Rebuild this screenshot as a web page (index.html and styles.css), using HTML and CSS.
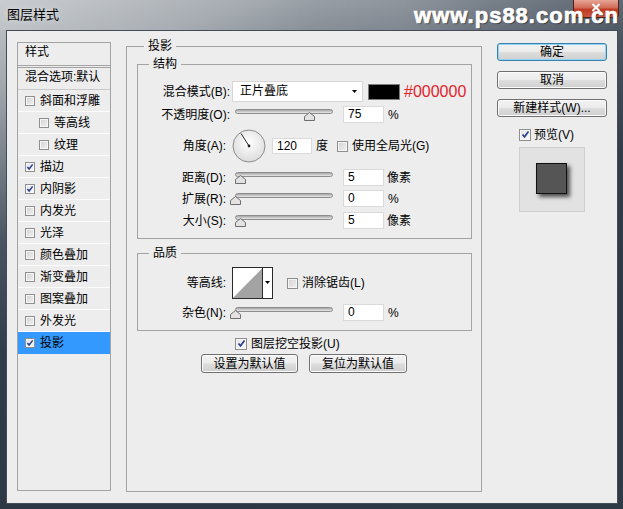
FILE: index.html
```html
<!DOCTYPE html>
<html>
<head>
<meta charset="utf-8">
<title>图层样式</title>
<link rel="stylesheet" href="styles.css">
</head>
<body>
<div class="win">
  <div class="titlebar">
    <span class="title">图层样式</span>
    <span class="close"><svg viewBox="0 0 10 9"><path d="M1.5 1l7 7M8.5 1l-7 7"/></svg></span>
    <span class="wm">www.ps88.com.cn</span>
  </div>
  <div class="client">
    <div class="styles">
      <div class="sh">样式</div>
      <div class="blend">混合选项:默认</div>
      <div class="it"><span class="cb"></span>斜面和浮雕</div>
      <div class="it sub"><span class="cb"></span>等高线</div>
      <div class="it sub"><span class="cb"></span>纹理</div>
      <div class="it"><span class="cb on"><svg viewBox="0 0 9 9"><path d="M1.5 4.5l2 2.3 4-5.3"/></svg></span>描边</div>
      <div class="it"><span class="cb on"><svg viewBox="0 0 9 9"><path d="M1.5 4.5l2 2.3 4-5.3"/></svg></span>内阴影</div>
      <div class="it"><span class="cb"></span>内发光</div>
      <div class="it"><span class="cb"></span>光泽</div>
      <div class="it"><span class="cb"></span>颜色叠加</div>
      <div class="it"><span class="cb"></span>渐变叠加</div>
      <div class="it"><span class="cb"></span>图案叠加</div>
      <div class="it"><span class="cb"></span>外发光</div>
      <div class="it sel"><span class="cb on"><svg viewBox="0 0 9 9"><path d="M1.5 4.5l2 2.3 4-5.3"/></svg></span>投影</div>
    </div>

    <fieldset class="main">
      <legend class="lg-main">投影</legend>
      <fieldset class="grp struct">
        <legend class="lg-grp">结构</legend>
        <div class="row r1">
          <span class="lbl wide">混合模式(B):</span>
          <span class="select">正片叠底<svg class="arrow" viewBox="0 0 5 3"><path d="M0 0h5L2.5 3z"/></svg></span>
          <span class="swatch"></span>
          <span class="hex">#000000</span>
        </div>
        <div class="row r2">
          <span class="lbl wide">不透明度(O):</span>
          <span class="slider s-wide"><span class="thumb" style="left:69px"><svg viewBox="0 0 11 9"><path d="M5.5 .5L10.5 4.5V8.5H.5V4.5z"/></svg></span></span>
          <span class="num">75</span>
          <span class="unit">%</span>
        </div>
        <div class="row r3">
          <span class="lbl">角度(A):</span>
          <svg class="dial" viewBox="0 0 34 34">
            <defs><radialGradient id="dg" cx="50%" cy="40%" r="60%"><stop offset="0" stop-color="#ffffff"/><stop offset="1" stop-color="#dcdcdc"/></radialGradient></defs>
            <circle cx="17" cy="17" r="16" fill="url(#dg)" stroke="#8c8c8c"/>
            <line x1="17" y1="17" x2="9" y2="4.5" stroke="#2a2a2a" stroke-width="1"/>
            <circle cx="17" cy="17" r="1.4" fill="#222"/>
          </svg>
          <span class="num n-angle">120</span>
          <span class="unit deg">度</span>
          <span class="cb cb-gl"></span>
          <span class="cbt">使用全局光(G)</span>
        </div>
        <div class="row r4">
          <span class="lbl">距离(D):</span>
          <span class="slider"><span class="thumb" style="left:0px"><svg viewBox="0 0 11 9"><path d="M5.5 .5L10.5 4.5V8.5H.5V4.5z"/></svg></span></span>
          <span class="num">5</span>
          <span class="unit px">像素</span>
        </div>
        <div class="row r5">
          <span class="lbl">扩展(R):</span>
          <span class="slider"><span class="thumb" style="left:-5px"><svg viewBox="0 0 11 9"><path d="M5.5 .5L10.5 4.5V8.5H.5V4.5z"/></svg></span></span>
          <span class="num">0</span>
          <span class="unit">%</span>
        </div>
        <div class="row r6">
          <span class="lbl">大小(S):</span>
          <span class="slider"><span class="thumb" style="left:0px"><svg viewBox="0 0 11 9"><path d="M5.5 .5L10.5 4.5V8.5H.5V4.5z"/></svg></span></span>
          <span class="num">5</span>
          <span class="unit px">像素</span>
        </div>
      </fieldset>

      <fieldset class="grp quality">
        <legend class="lg-grp">品质</legend>
        <div class="row q1">
          <span class="lbl">等高线:</span>
          <svg class="contour" viewBox="0 0 41 32">
            <rect x=".5" y=".5" width="40" height="31" fill="#fff" stroke="#2a2a2a"/>
            <path d="M1 31L30.5 1V31z" fill="#a3a3a3"/>
            <line x1="30.5" y1="1" x2="30.5" y2="31" stroke="#2a2a2a"/>
            <path d="M33 14h5l-2.5 3z" fill="#000"/>
          </svg>
          <span class="cb cb-aa"></span>
          <span class="cbt">消除锯齿(L)</span>
        </div>
        <div class="row q2">
          <span class="lbl">杂色(N):</span>
          <span class="slider"><span class="thumb" style="left:-5px"><svg viewBox="0 0 11 9"><path d="M5.5 .5L10.5 4.5V8.5H.5V4.5z"/></svg></span></span>
          <span class="num">0</span>
          <span class="unit">%</span>
        </div>
      </fieldset>

      <div class="row knock">
        <span class="cb on big"><svg viewBox="0 0 9 9"><path d="M1.5 4.5l2 2.3 4-5.3"/></svg></span>
        <span class="cbt">图层挖空投影(U)</span>
      </div>
      <div class="defaults">
        <button class="btn b-def">设置为默认值</button>
        <button class="btn b-res">复位为默认值</button>
      </div>
    </fieldset>

    <div class="side">
      <button class="btn ok">确定</button>
      <button class="btn sbtn">取消</button>
      <button class="btn sbtn">新建样式(W)...</button>
      <div class="prev-row">
        <span class="cb on big"><svg viewBox="0 0 9 9"><path d="M1.5 4.5l2 2.3 4-5.3"/></svg></span>
        <span class="cbt">预览(V)</span>
      </div>
      <div class="preview"><span class="psq"></span></div>
    </div>
  </div>
</div>
</body>
</html>
```

FILE: styles.css
```css
html, body {
  margin: 0;
  padding: 0;
  background: #2d3845;
}

body {
  font-family: "Liberation Sans", "Noto Sans CJK SC", sans-serif;
  font-size: 12px;
  line-height: 16px;
  color: #000;
}

.win {
  width: 623px;
  height: 509px;
  position: relative;
  overflow: hidden;
  background: linear-gradient(162deg, #c2c6ca 0%, #a2a8ae 12%, #7a828b 22%, #4a5460 34%, #313c49 50%, #2d3845 75%, #2f3a47 100%);
}

/* ---------- title bar ---------- */
.titlebar {
  height: 30px;
  position: relative;
  background: linear-gradient(90deg, rgba(255,255,255,0.12) 0%, rgba(255,255,255,0.05) 30%, rgba(255,255,255,0) 50%, rgba(255,255,255,0.06) 65%, rgba(255,255,255,0) 80%);
}

.title {
  display: block;
  padding-left: 7px;
  line-height: 30px;
  font-size: 13px;
  color: #000;
  text-shadow: 0 0 6px rgba(255,255,255,0.7);
}

.close {
  position: absolute;
  left: 573px;
  top: 0;
  width: 46px;
  height: 18px;
  box-sizing: border-box;
  border: 1px solid #4d2219;
  border-top: none;
  border-radius: 0 0 4px 4px;
  background: linear-gradient(#e6a597 0%, #d36c58 45%, #bd3b25 55%, #c9553c 100%);
  display: flex;
  justify-content: center;
  padding-top: 3px;
}

.close svg {
  width: 10px;
  height: 9px;
  display: block;
}

.close path {
  fill: none;
  stroke: #fff;
  stroke-width: 2;
}

.wm {
  position: absolute;
  right: 4px;
  top: 5px;
  font: bold 22px/22px "Liberation Sans", sans-serif;
  letter-spacing: 1px;
  color: #fff;
  -webkit-text-stroke: 0.7px #fff;
  text-shadow: 1px 1px 1px rgba(0,0,0,0.6);
}

/* ---------- client area ---------- */
.client {
  margin-left: 6px;
  width: 612px;
  height: 474px;
  box-sizing: border-box;
  border: 1px solid #434d58;
  background: #ededed;
  display: flex;
  align-items: flex-start;
  padding: 7px 0 0 10px;
}

/* ---------- left styles list ---------- */
.styles {
  width: 94px;
  height: 449px;
  margin-top: 4px;
  box-sizing: border-box;
  border: 1px solid #a3a3a3;
  flex: none;
}

.sh {
  height: 22px;
  line-height: 19px;
  padding-left: 7px;
  border-bottom: 3px double #a3a3a3;
}

.blend {
  height: 21px;
  line-height: 19px;
  padding-left: 7px;
  border-bottom: 1px solid #c9c9c9;
  white-space: nowrap;
}

.it {
  height: 21px;
  border-bottom: 1px solid #fbfbfb;
  display: flex;
  align-items: center;
  padding-left: 7px;
  white-space: nowrap;
}

.it .cb {
  width: 10px;
  height: 10px;
  margin-right: 5px;
}

.it.sub {
  padding-left: 21px;
}

.it.sel {
  background: #3399ff;
  border-bottom-color: #3399ff;
}

/* ---------- checkbox ---------- */
.cb {
  display: inline-flex;
  align-items: center;
  justify-content: center;
  width: 11px;
  height: 11px;
  box-sizing: border-box;
  border: 1px solid #8e8f8f;
  background: linear-gradient(135deg, #d2d2d2 0%, #f2f2f2 100%);
  box-shadow: inset 0 0 0 1px #f6f6f6;
  flex: none;
}

.cb.on {
  background: linear-gradient(135deg, #e4e4e4 0%, #fafafa 100%);
}

.cb svg {
  width: 8px;
  height: 8px;
  display: block;
}

.cb path {
  fill: none;
  stroke: #2a3f8f;
  stroke-width: 1.7;
}

.cb.big {
  width: 12px;
  height: 12px;
}

.cb.big svg {
  width: 9px;
  height: 9px;
}

.cbt {
  white-space: nowrap;
  margin-left: 4px;
}

/* ---------- main group ---------- */
fieldset {
  margin: 0;
  padding: 0;
  min-width: 0;
  border: 1px solid #a3a3a3;
}

legend {
  padding: 0 4px;
  line-height: 16px;
  font-size: 12px;
}

.main {
  width: 356px;
  height: 454px;
  box-sizing: border-box;
  margin-left: 15px;
  flex: none;
}

.lg-main {
  margin-left: 17px;
}

.grp {
  width: 335px;
  box-sizing: border-box;
  margin-left: 10px;
}

.lg-grp {
  margin-left: 11px;
}

.struct {
  margin-top: 2px;
  padding: 9px 0 9px 0;
}

.quality {
  margin-top: 6px;
  padding: 6px 0 9px 0;
}

.row {
  display: flex;
  align-items: center;
  height: 17px;
  white-space: nowrap;
}

.r1 { height: 21px; }
.r2 { margin-top: 4px; }
.r3 { margin-top: 6px; height: 34px; }
.r4 { margin-top: 6px; }
.r5 { margin-top: 4px; }
.r6 { margin-top: 5px; }
.q1 { height: 32px; }
.q2 { margin-top: 5px; }

.lbl {
  width: 88px;
  text-align: right;
  flex: none;
}

.lbl.wide {
  width: 92px;
}

.select {
  margin-left: 2px;
  width: 131px;
  height: 21px;
  box-sizing: border-box;
  border: 1px solid #d6d6d6;
  background: #fff;
  padding-left: 7px;
  line-height: 19px;
  display: flex;
  align-items: center;
  position: relative;
}

.select .arrow {
  width: 5px;
  height: 3px;
  margin-left: auto;
  margin-right: 5px;
  fill: #000;
}

.swatch {
  margin-left: 5px;
  width: 32px;
  height: 16px;
  box-sizing: border-box;
  border: 1px solid #7d7d7d;
  background: #000;
  flex: none;
}

.hex {
  margin-left: 4px;
  color: #e3232c;
  font: 16px/16px "Liberation Sans", sans-serif;
}

.slider {
  position: relative;
  width: 98px;
  height: 17px;
  margin-left: 9px;
  flex: none;
}

.slider.s-wide {
  margin-left: 5px;
}

.slider::before {
  content: "";
  position: absolute;
  left: 0;
  right: 0;
  top: 3px;
  height: 5px;
  box-sizing: border-box;
  border: 1px solid #8d8d8d;
  border-radius: 3px;
  background: linear-gradient(#a6a6a6, #e8e8e8);
}

.thumb {
  position: absolute;
  top: 6px;
  width: 11px;
  height: 9px;
}

.thumb svg {
  display: block;
  width: 11px;
  height: 9px;
}

.thumb path {
  fill: #e2e2e2;
  stroke: #6e6e6e;
  stroke-width: 1;
}

.num {
  margin-left: 10px;
  width: 41px;
  height: 17px;
  box-sizing: border-box;
  border: 1px solid #dadada;
  background: #fff;
  padding-left: 4px;
  line-height: 15px;
  flex: none;
}

.unit {
  margin-left: 4px;
}

.unit.px {
  margin-left: 3px;
}

.dial {
  margin-left: 6px;
  width: 34px;
  height: 34px;
  flex: none;
}

.num.n-angle {
  margin-left: 6px;
  width: 40px;
  height: 16px;
  line-height: 14px;
}

.unit.deg {
  margin-left: 4px;
}

.cb-gl {
  margin-left: 9px;
}

.contour {
  margin-left: 6px;
  width: 41px;
  height: 32px;
  flex: none;
}

.cb-aa {
  margin-left: 14px;
}

.knock {
  margin-top: 6px;
  margin-left: 108px;
  height: 13px;
}

.defaults {
  margin-top: 4px;
  display: flex;
  justify-content: center;
  gap: 11px;
}

/* ---------- buttons ---------- */
.btn {
  font-family: "Liberation Sans", "Noto Sans CJK SC", sans-serif;
  font-size: 12px;
  line-height: 14px;
  color: #000;
  padding: 0;
  box-sizing: border-box;
  border: 1px solid #707070;
  border-radius: 3px;
  background: linear-gradient(#f3f3f3 0%, #ebebeb 48%, #dddddd 52%, #cfcfcf 100%);
  box-shadow: inset 0 0 0 1px #fbfbfb;
  text-align: center;
  white-space: nowrap;
}

.b-def {
  width: 97px;
  height: 19px;
}

.b-res {
  width: 98px;
  height: 19px;
}

.side {
  width: 110px;
  margin: 5px 0 0 15px;
  display: flex;
  flex-direction: column;
  flex: none;
}

.side .btn {
  width: 110px;
  height: 18px;
}

.side .sbtn {
  margin-top: 10px;
}

.btn.ok {
  border-color: #3c7fb1;
  box-shadow: inset 0 0 0 1px #8fd6f6;
}

.prev-row {
  margin-top: 11px;
  margin-left: 22px;
  height: 13px;
  display: flex;
  align-items: center;
}

.prev-row .cbt {
  margin-left: 3px;
}

.preview {
  margin-top: 6px;
  margin-left: 22px;
  width: 66px;
  height: 65px;
  box-sizing: border-box;
  border: 1px solid #cfcfcf;
  background: #e2e2e2;
  display: flex;
  align-items: center;
  justify-content: center;
}

.psq {
  display: block;
  width: 31px;
  height: 31px;
  box-sizing: border-box;
  border: 1px solid #111;
  background: #555;
  box-shadow: 3px 3px 4px rgba(0,0,0,0.65);
  margin: -2px 0 0 -2px;
}
```
